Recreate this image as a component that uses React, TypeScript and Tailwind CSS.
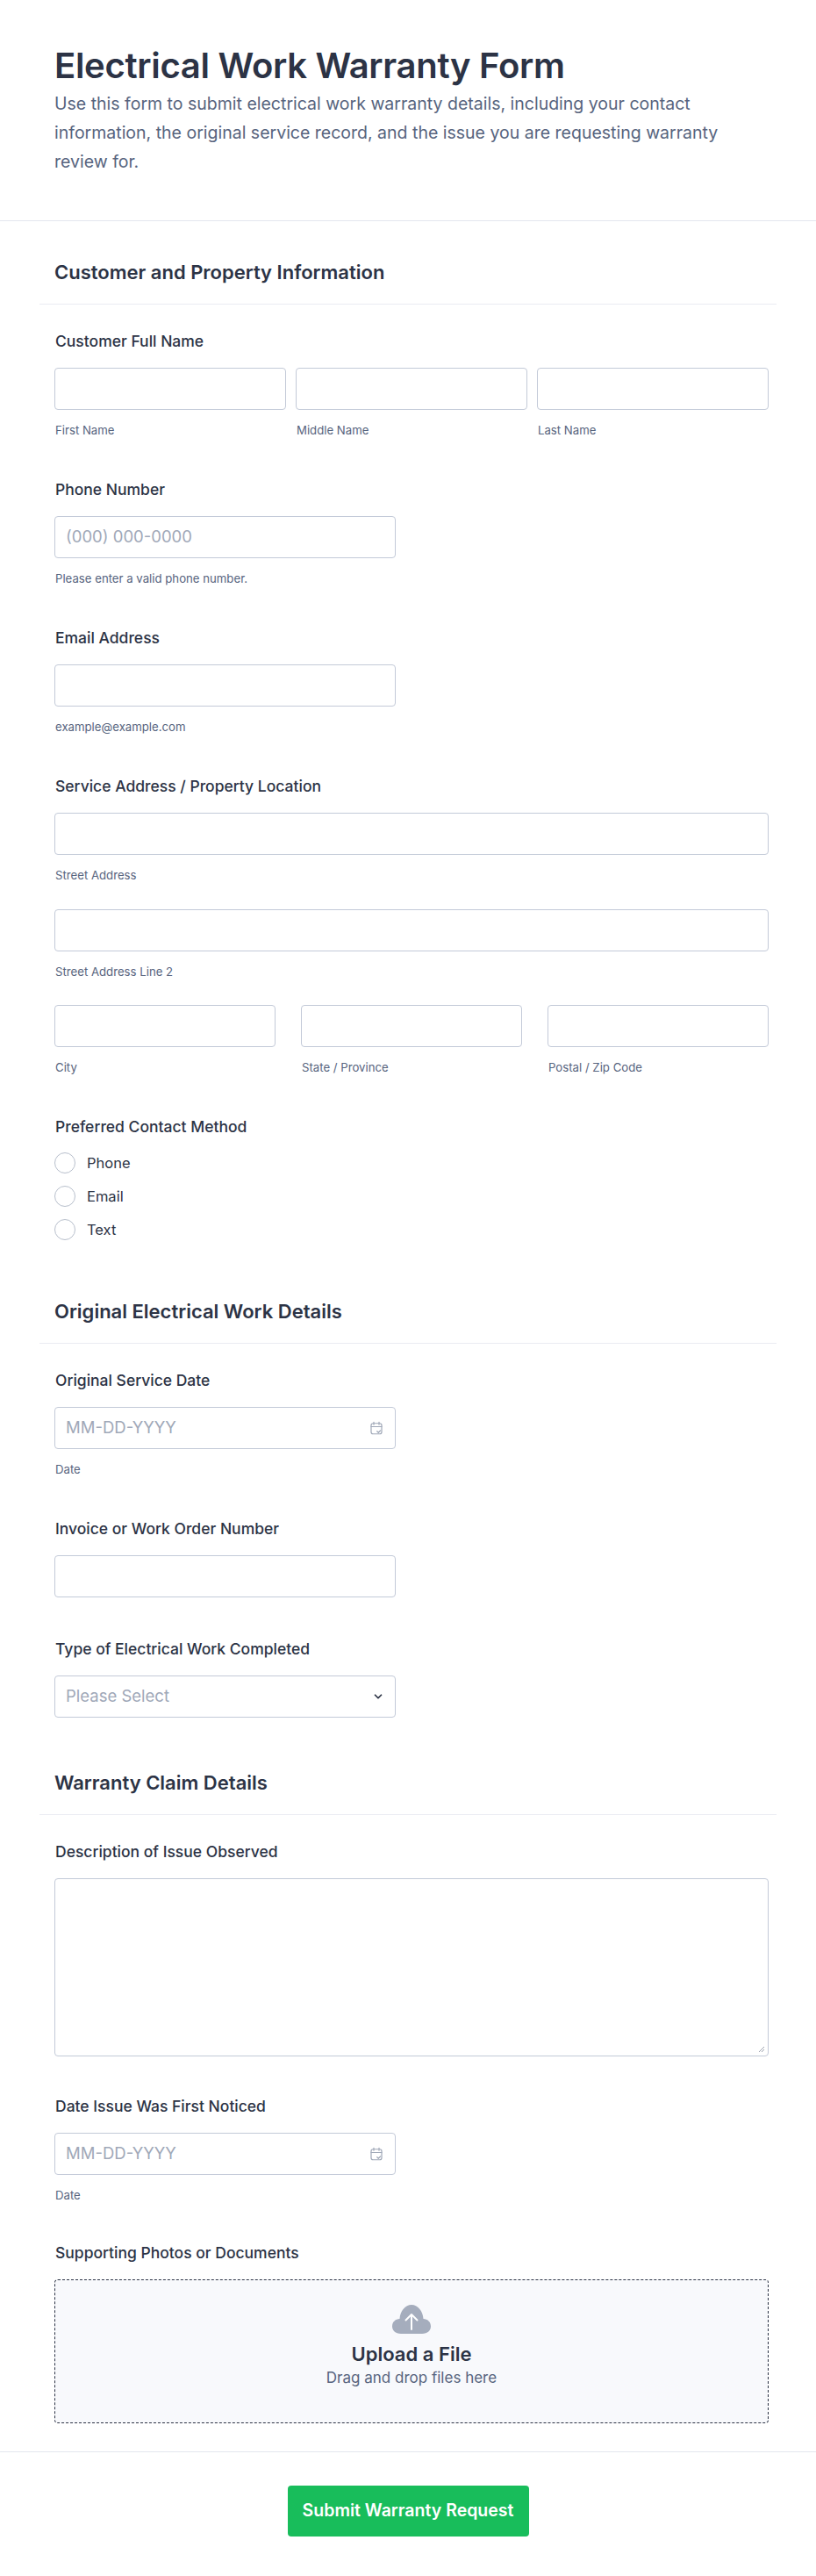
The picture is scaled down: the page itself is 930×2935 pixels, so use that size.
import React from "react";

const font = { fontFamily: "Inter, 'Noto Sans', sans-serif" };

function Label({ children }: { children: React.ReactNode }) {
  return <div className="text-[17.5px] leading-[24px] font-medium text-[#2c3345] pl-[1px]">{children}</div>;
}
function Sub({ children }: { children: React.ReactNode }) {
  return <div className="mt-[14px] text-[13.2px] leading-[18px] text-[#57647e] pl-[1px]">{children}</div>;
}
function Input({ placeholder, className = "" }: { placeholder?: string; className?: string }) {
  return (
    <div className={`h-[48px] rounded-[4px] border border-[#c3cad8] bg-white flex items-center px-[12px] text-[18.5px] text-[#a0a8b8] ${className}`}>
      {placeholder}
    </div>
  );
}
function Calendar() {
  return (
    <svg width="18" height="18" viewBox="0 0 24 24" fill="none" stroke="#a0a8b8" strokeWidth="1.6" strokeLinecap="round" strokeLinejoin="round">
      <rect x="4" y="5" width="16" height="16" rx="3" />
      <path d="M8 3v4M16 3v4M4 10h16M13 17l2 2 3-3" />
    </svg>
  );
}
function DateField() {
  return (
    <div className="mt-[18px] w-[389px] h-[48px] rounded-[4px] border border-[#c3cad8] bg-white flex items-center justify-between px-[12px] text-[18.5px] text-[#a0a8b8]">
      <span>MM-DD-YYYY</span>
      <Calendar />
    </div>
  );
}
function SectionHeading({ children, first }: { children: React.ReactNode; first?: boolean }) {
  return (
    <div className={`${first ? "mt-[44px]" : "mt-[60px]"} border-b border-[#eaebf2] pb-[22px] pl-[17px] mb-[30px]`}>
      <h2 className="text-[22px] leading-[28px] font-semibold text-[#2c3345]">{children}</h2>
    </div>
  );
}

export default function App() {
  return (
    <div style={font} className="bg-white min-h-[2935px] w-[930px]">
      <div className="border-b border-[#e3e6ee] px-[62px] pt-[51px] pb-[50px]">
        <h1 className="text-[40px] leading-[48px] font-semibold text-[#2c3345] tracking-[-0.3px]">Electrical Work Warranty Form</h1>
        <p className="mt-[3px] text-[19.5px] leading-[33px] text-[#57647e] pr-[20px]">
          Use this form to submit electrical work warranty details, including your contact information, the original service record, and the issue you are requesting warranty review for.
        </p>
      </div>

      <div className="mx-[45px]">
        <SectionHeading first>Customer and Property Information</SectionHeading>
        <div className="pl-[17px] pr-[9px] flex flex-col gap-[47px]">
          <div>
            <Label>Customer Full Name</Label>
            <div className="mt-[18px] grid grid-cols-3 gap-[11px]">
              {["First Name", "Middle Name", "Last Name"].map((s) => (
                <div key={s}>
                  <Input />
                  <Sub>{s}</Sub>
                </div>
              ))}
            </div>
          </div>
          <div>
            <Label>Phone Number</Label>
            <Input className="mt-[18px] w-[389px]" placeholder="(000) 000-0000" />
            <Sub>Please enter a valid phone number.</Sub>
          </div>
          <div>
            <Label>Email Address</Label>
            <Input className="mt-[18px] w-[389px]" />
            <Sub>example@example.com</Sub>
          </div>
          <div>
            <Label>Service Address / Property Location</Label>
            <Input className="mt-[18px]" />
            <Sub>Street Address</Sub>
            <Input className="mt-[30px]" />
            <Sub>Street Address Line 2</Sub>
            <div className="mt-[29px] grid grid-cols-3 gap-[29px]">
              {["City", "State / Province", "Postal / Zip Code"].map((s) => (
                <div key={s}>
                  <Input />
                  <Sub>{s}</Sub>
                </div>
              ))}
            </div>
          </div>
          <div>
            <Label>Preferred Contact Method</Label>
            <div className="mt-[10px]">
              {["Phone", "Email", "Text"].map((s) => (
                <div key={s} className="h-[38px] flex items-center gap-[13px]">
                  <span className="w-[24px] h-[24px] rounded-full border border-[#b8bfcc] bg-white" />
                  <span className="text-[16.5px] text-[#2c3345]">{s}</span>
                </div>
              ))}
            </div>
          </div>
        </div>

        <SectionHeading>Original Electrical Work Details</SectionHeading>
        <div className="pl-[17px] pr-[9px] flex flex-col gap-[47px]">
          <div>
            <Label>Original Service Date</Label>
            <DateField />
            <Sub>Date</Sub>
          </div>
          <div>
            <Label>Invoice or Work Order Number</Label>
            <Input className="mt-[18px] w-[389px]" />
          </div>
          <div>
            <Label>Type of Electrical Work Completed</Label>
            <div className="mt-[18px] w-[389px] h-[48px] rounded-[4px] border border-[#c3cad8] bg-white flex items-center justify-between px-[12px] text-[18.5px] text-[#a0a8b8]">
              <span>Please Select</span>
              <svg width="14" height="14" viewBox="0 0 24 24" fill="none" stroke="#2c3345" strokeWidth="3" strokeLinecap="round" strokeLinejoin="round">
                <path d="M6 9l6 6 6-6" />
              </svg>
            </div>
          </div>
        </div>

        <SectionHeading>Warranty Claim Details</SectionHeading>
        <div className="pl-[17px] pr-[9px] flex flex-col gap-[45px]">
          <div>
            <Label>Description of Issue Observed</Label>
            <div className="mt-[18px] h-[203px] rounded-[4px] border border-[#c3cad8] bg-white relative">
              <svg className="absolute right-[3px] bottom-[3px]" width="8" height="8" viewBox="0 0 8 8" stroke="#9aa1ad" strokeWidth="1">
                <path d="M7 1L1 7M7 4L4 7" />
              </svg>
            </div>
          </div>
          <div>
            <Label>Date Issue Was First Noticed</Label>
            <DateField />
            <Sub>Date</Sub>
          </div>
          <div>
            <Label>Supporting Photos or Documents</Label>
            <div className="mt-[18px] h-[164px] rounded-[4px] border border-dashed border-[#2c3345] bg-[#f8f9fc] flex flex-col items-center pt-[26px]">
              <svg width="48" height="36" viewBox="0 0 48 36">
                <path d="M12 35C5.5 35 2 31 2 26.5 2 21.5 6 18 10.5 18 11 9 17 2 24 2s13 7 13.5 16C42 18 46 21.5 46 26.5 46 31 42.5 35 36 35Z" fill="#a5adbd" />
                <path d="M24 30V13M17.5 19.5L24 13l6.5 6.5" stroke="white" strokeWidth="2" fill="none" strokeLinecap="round" strokeLinejoin="round" />
              </svg>
              <div className="mt-[8px] text-[22px] leading-[28px] font-semibold text-[#2c3345]">Upload a File</div>
              <div className="mt-[2px] text-[17px] leading-[22px] text-[#57647e]">Drag and drop files here</div>
            </div>
          </div>
        </div>
      </div>

      <div className="mt-[32px] border-t border-[#e3e6ee] pt-[38px] pb-[50px] flex justify-center">
        <button className="h-[58px] w-[275px] rounded-[4px] bg-[#18bd5b] text-white text-[19.5px] font-semibold">
          Submit Warranty Request
        </button>
      </div>
    </div>
  );
}
